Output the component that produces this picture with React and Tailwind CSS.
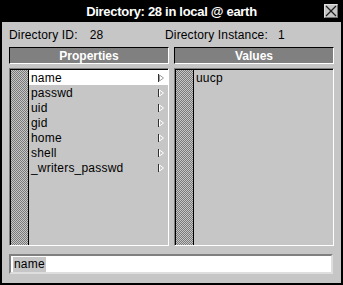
import React from "react";

const props = ["name", "passwd", "uid", "gid", "home", "shell", "_writers_passwd"];

function Arrow({ selected }) {
  return (
    <svg width="6" height="8" viewBox="0 0 6 8" className="shrink-0">
      <line x1="0.5" y1="0" x2="0.5" y2="8" stroke="#303030" strokeWidth="1" />
      <polygon points="1.5,1 5.5,4 1.5,7" fill="none" stroke={selected ? "#9a9a9a" : "#ffffff"} strokeWidth="1" />
    </svg>
  );
}

const stipple =
  "w-[18px] shrink-0 bg-[repeating-conic-gradient(#7a7a7a_0%_25%,#c6c6c6_0%_50%)] bg-[length:2px_2px] border-r border-black";

export default function App() {
  return (
    <div
      className="w-[343px] h-[285px] bg-black flex flex-col text-black"
      style={{ fontFamily: '"Liberation Sans", Arial, sans-serif' }}
    >
      {/* title bar */}
      <div className="h-[22px] shrink-0 relative flex items-center justify-center">
        <span className="text-white font-bold text-[13px] leading-none tracking-[-0.3px]">
          Directory: 28 in local @ earth
        </span>
        <div className="absolute left-[324px] top-[4px] w-[14px] h-[14px] bg-[#c6c6c6] border border-[#e0e0e0] border-r-[#707070] border-b-[#707070]">
          <svg width="12" height="12" viewBox="0 0 12 12" className="block">
            <line x1="1" y1="1" x2="11" y2="11" stroke="#202020" strokeWidth="1.2" />
            <line x1="11" y1="1" x2="1" y2="11" stroke="#202020" strokeWidth="1.2" />
          </svg>
        </div>
      </div>

      {/* body */}
      <div className="flex-1 mx-[2px] mb-[2px] bg-[#c6c6c6] flex flex-col px-[7px]">
        <div className="h-[25px] flex items-center text-[12px] leading-none tracking-[0.15px]">
          <div className="w-[156px] flex">
            <span>Directory ID:</span>
            <span className="ml-[12px]">28</span>
          </div>
          <div className="flex">
            <span>Directory Instance:</span>
            <span className="ml-[10px]">1</span>
          </div>
        </div>

        {/* headers */}
        <div className="flex gap-[5px]">
          {["Properties", "Values"].map((h) => (
            <div
              key={h}
              className="w-[160px] h-[17px] bg-[#808080] border-t border-l border-black border-b border-r border-b-white border-r-white flex items-center justify-center text-white font-bold text-[12px] leading-none"
            >
              {h}
            </div>
          ))}
        </div>

        {/* lists */}
        <div className="flex gap-[5px] mt-[4px]">
          <div className="w-[160px] h-[178px] border-t border-l border-[#808080] border-b border-r border-b-white border-r-white">
            <div className="h-full flex border-t border-l border-black">
              <div className={stipple} />
              <div className="flex-1 flex flex-col">
                {props.map((p, i) => (
                  <div
                    key={p}
                    className={`h-[15px] flex items-center justify-between pl-[2px] pr-[4px] text-[12px] leading-none tracking-[0.2px] ${
                      i === 0 ? "bg-white" : ""
                    }`}
                  >
                    <span>{p}</span>
                    <Arrow selected={i === 0} />
                  </div>
                ))}
              </div>
            </div>
          </div>
          <div className="w-[160px] h-[178px] border-t border-l border-[#808080] border-b border-r border-b-white border-r-white">
            <div className="h-full flex border-t border-l border-black">
              <div className={stipple} />
              <div className="flex-1 flex flex-col">
                <div className="h-[15px] flex items-center pl-[2px] text-[12px] leading-none tracking-[0.2px]">uucp</div>
              </div>
            </div>
          </div>
        </div>

        {/* input */}
        <div className="mt-[8px] w-[324px] h-[20px] bg-white border-t-2 border-l-2 border-[#808080] border-b-2 border-r-2 border-b-[#dedede] border-r-[#dedede] flex items-center pl-[2px]">
          <span className="bg-[#c6c6c6] text-[12px] leading-[15px] px-[1px] tracking-[0.2px]">name</span>
        </div>
      </div>
    </div>
  );
}
